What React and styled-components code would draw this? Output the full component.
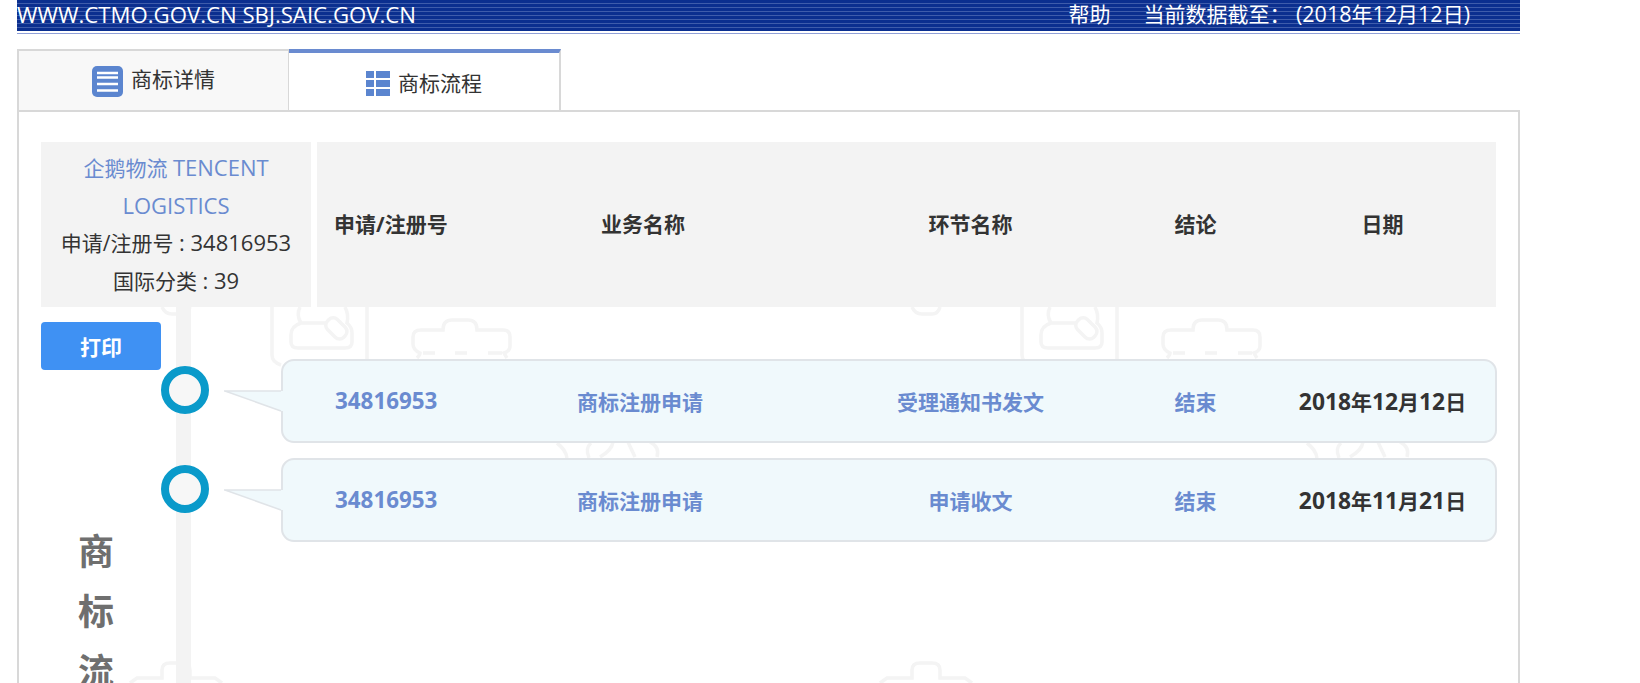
import React from "react";
import styled, { createGlobalStyle } from "styled-components";

const Global = createGlobalStyle`
  html, body { margin: 0; padding: 0; background: #fff; height: 683px; overflow: hidden; }
  body { font-family: "Open Sans", "Noto Sans CJK SC", "Noto Sans", sans-serif; color: #333; }
  * { box-sizing: border-box; }
`;

const Page = styled.div`
  width: 1503px;
  height: 683px;
  margin-left: 17px;
  overflow: hidden;
`;

const Latin = styled.span`
  font-size: ${(p) => p.$size || 22}px;
  line-height: 1;
`;

const TopBar = styled.header`
  height: 34px;
  padding: 0 50px 5px 0;
  display: flex;
  align-items: center;
  justify-content: space-between;
  color: #fff;
  font-size: 21px;
  white-space: pre;
  background:
    linear-gradient(#fff, #fff) 0 31px / 100% 2px no-repeat,
    linear-gradient(#8fa0d8, #8fa0d8) 0 33px / 100% 1px no-repeat,
    repeating-linear-gradient(#0b2f8f 0 3px, #3e5cab 3px 4px);
`;

const SiteName = styled.div`
  font-size: 22.2px;
  line-height: 29px;
`;

const TopRight = styled.div`
  display: flex;
  gap: 33px;
  line-height: 29px;
`;

const Tabs = styled.nav`
  display: flex;
  margin-top: 15px;
  height: 61px;
`;

const Tab = styled.div`
  width: ${(p) => (p.$active ? "272px" : "273px")};
  display: flex;
  align-items: center;
  justify-content: center;
  gap: 8px;
  font-size: 21px;
  color: #333;
  background: ${(p) => (p.$active ? "#fff" : "#f8f8f8")};
  border-top: ${(p) => (p.$active ? "4px solid #6a8bd0" : "2px solid #d8d8d8")};
  border-left: ${(p) => (p.$active ? "0" : "2px solid #d8d8d8")};
  border-right: 2px solid #d8d8d8;
  margin-left: ${(p) => (p.$active ? "-1px" : "0")};
`;

const TabIcon = styled.svg`
  flex: none;
  margin-top: ${(p) => p.$shift}px;
`;

const TabLabel = styled.span`
  margin-top: ${(p) => p.$shift}px;
`;

const Panel = styled.main`
  position: relative;
  height: 640px;
  padding: 30px 22px 0 22px;
  border: 2px solid #d8d8d8;
`;

const Watermark = styled.svg`
  position: absolute;
  left: 0;
  top: 0;
  width: 1499px;
  height: 571px;
`;

const HeadRow = styled.section`
  position: relative;
  z-index: 1;
  display: flex;
  gap: 6px;
  height: 165px;
`;

const InfoBox = styled.div`
  width: 270px;
  padding-top: 8px;
  background: #f3f3f3;
  text-align: center;
  font-size: 21px;
  line-height: 37.5px;
`;

const TrademarkName = styled.div`
  color: #6a8bd0;
`;

const TableHead = styled.div`
  flex: 1;
  display: grid;
  grid-template-columns: 149px 354px 301px 149px 225px;
  align-items: center;
  background: #f3f3f3;
  font-size: 21px;
  font-weight: 700;
  color: #333;
  padding-bottom: 3px;
`;

const HeadCell = styled.div`
  text-align: ${(p) => (p.$left ? "left" : "center")};
  padding-left: ${(p) => (p.$left ? "17px" : "0")};
  white-space: nowrap;
`;

const Body = styled.section`
  display: flex;
  height: 500px;
`;

const Side = styled.aside`
  width: 135px;
  padding-top: 15px;
  flex: none;
`;

const PrintButton = styled.button`
  display: block;
  width: 120px;
  height: 48px;
  padding: 0;
  border: 0;
  border-radius: 4px;
  background: #3f91f3;
  color: #fff;
  font: 700 21px "Open Sans", "Noto Sans CJK SC", sans-serif;
`;

const VerticalTitle = styled.h2`
  width: 36px;
  margin: 152px 0 0 37px;
  font-size: 36px;
  line-height: 60px;
  font-weight: 700;
  color: #6f6f6f;
  text-align: center;
`;

const Timeline = styled.div`
  position: relative;
  flex: 1;
  padding-top: 52px;
  border-left: 15px solid #f3f3f3;
  display: flex;
  flex-direction: column;
  gap: 15px;
`;

const Item = styled.article`
  display: flex;
  align-items: flex-start;
  height: 84px;
`;

const Dot = styled.div`
  flex: none;
  width: 48px;
  height: 48px;
  margin: 7px 0 0 -30px;
  border: 8px solid #0a9aca;
  border-radius: 50%;
  background: #f7f7f7;
`;

const Pointer = styled.svg`
  position: relative;
  z-index: 2;
  flex: none;
  width: 59px;
  height: 23px;
  margin: 31px -2px 0 15px;
`;

const Bubble = styled.div`
  flex: 1;
  height: 84px;
  display: grid;
  grid-template-columns: 177px 360px 301px 149px 225px;
  align-items: center;
  background: #f0f9fc;
  border: 2px solid #e0e4e8;
  border-radius: 13px;
  font-size: 21px;
  font-weight: 700;
  color: #6a8bd0;
`;

const Cell = styled.div`
  text-align: ${(p) => (p.$left ? "left" : "center")};
  padding-left: ${(p) => (p.$left ? "52px" : "0")};
  color: ${(p) => (p.$dark ? "#333" : "#6a8bd0")};
  white-space: nowrap;
`;

const DetailIcon = () => (
  <TabIcon $shift={2} width="31" height="31" viewBox="0 0 31 31" aria-hidden="true">
    <rect width="31" height="31" rx="5" fill="#5b85cf" />
    <path d="M5 7h21M5 11.5h21M5 18h21M5 24.5h21" stroke="#fff" strokeWidth="2.6" />
  </TabIcon>
);

const FlowIcon = () => (
  <TabIcon $shift={3} width="24" height="25" viewBox="0 0 24 25" aria-hidden="true">
    <path d="M0 0h8v7H0zM10 0h14v7H10zM0 9h8v7H0zM10 9h14v7H10zM0 18h8v7H0zM10 18h14v7H10z" fill="#5b85cf" />
  </TabIcon>
);

const Fragment = ({ x = 0 }) => (
  <g transform={`translate(${x} 0)`}>
    <path d="M162 307Q165 314 172 314H182Q188 314 190 307" />
    <path d="M272 300V355Q272 362 281 365M367 300V361" />
    <path d="M300 307Q296 315 301 323Q291 326 291 335V342Q291 348 298 348H345Q352 348 352 342V333Q352 327 347 323Q349 315 345 307M301 323H326" />
    <rect x="325" y="321" width="23" height="14" rx="6" transform="rotate(45 336 328)" />
    <path d="M417 358Q420 355 420 353Q413 350 413 344V337Q413 330 421 330H443Q443 320 452 320H468Q477 320 477 330H503Q510 330 510 337V346Q510 351 504 353Q505 355 507 358M423 353H435M455 353H467M488 353H502" />
    <path d="M557 443Q566 450 567 458M589 458Q585 448 591 443M600 457Q612 450 613 442M628 442L635 457M650 442Q660 447 657 457" />
    <path d="M130 683L137 678H162V670Q162 663 170 663H182Q190 663 190 670V678H215L222 683" />
  </g>
);

const rows = [
  { task: "商标注册申请", step: "受理通知书发文", date: ["2018", "年", "12", "月", "12", "日"] },
  { task: "商标注册申请", step: "申请收文", date: ["2018", "年", "11", "月", "21", "日"] },
];

export default function App() {
  return (
    <Page>
      <Global />
      <TopBar>
        <SiteName>WWW.CTMO.GOV.CN SBJ.SAIC.GOV.CN</SiteName>
        <TopRight>
          <span>帮助</span>
          <span>
            当前数据截至： <Latin $size={21.5}>(2018</Latin>年<Latin $size={21.5}>12</Latin>月<Latin $size={21.5}>12</Latin>日<Latin $size={21.5}>)</Latin>
          </span>
        </TopRight>
      </TopBar>
      <Tabs>
        <Tab>
          <DetailIcon />
          <TabLabel $shift={-5}>商标详情</TabLabel>
        </Tab>
        <Tab $active>
          <FlowIcon />
          <TabLabel $shift={0}>商标流程</TabLabel>
        </Tab>
      </Tabs>
      <Panel>
        <Watermark viewBox="19 112 1499 571" fill="none" stroke="#f4f4f4" strokeWidth="3.5" aria-hidden="true">
          <Fragment />
          <Fragment x={750} />
        </Watermark>
        <HeadRow>
          <InfoBox>
            <TrademarkName>
              企鹅物流 <Latin>TENCENT</Latin> <Latin>LOGISTICS</Latin>
            </TrademarkName>
            <div>
              申请/注册号 <Latin>: 34816953</Latin>
            </div>
            <div>
              国际分类 <Latin>: 39</Latin>
            </div>
          </InfoBox>
          <TableHead>
            <HeadCell $left>申请/注册号</HeadCell>
            <HeadCell>业务名称</HeadCell>
            <HeadCell>环节名称</HeadCell>
            <HeadCell>结论</HeadCell>
            <HeadCell>日期</HeadCell>
          </TableHead>
        </HeadRow>
        <Body>
          <Side>
            <PrintButton>打印</PrintButton>
            <VerticalTitle>商标流程</VerticalTitle>
          </Side>
          <Timeline>
            {rows.map((r) => (
              <Item key={r.date.join("")}>
                <Dot />
                <Pointer viewBox="0 0 59 23" aria-hidden="true">
                  <path d="M0 1H59V21L57 21Z" fill="#f0f9fc" />
                  <path d="M0 1H57M1 1L57 21" fill="none" stroke="#e0e4e8" strokeWidth="1.5" />
                </Pointer>
                <Bubble>
                  <Cell $left>
                    <Latin $size={22.4}>34816953</Latin>
                  </Cell>
                  <Cell>{r.task}</Cell>
                  <Cell>{r.step}</Cell>
                  <Cell>结束</Cell>
                  <Cell $dark>
                    {r.date.map((part, i) =>
                      i % 2 === 0 ? (
                        <Latin key={i} $size={22.8}>
                          {part}
                        </Latin>
                      ) : (
                        part
                      )
                    )}
                  </Cell>
                </Bubble>
              </Item>
            ))}
          </Timeline>
        </Body>
      </Panel>
    </Page>
  );
}
